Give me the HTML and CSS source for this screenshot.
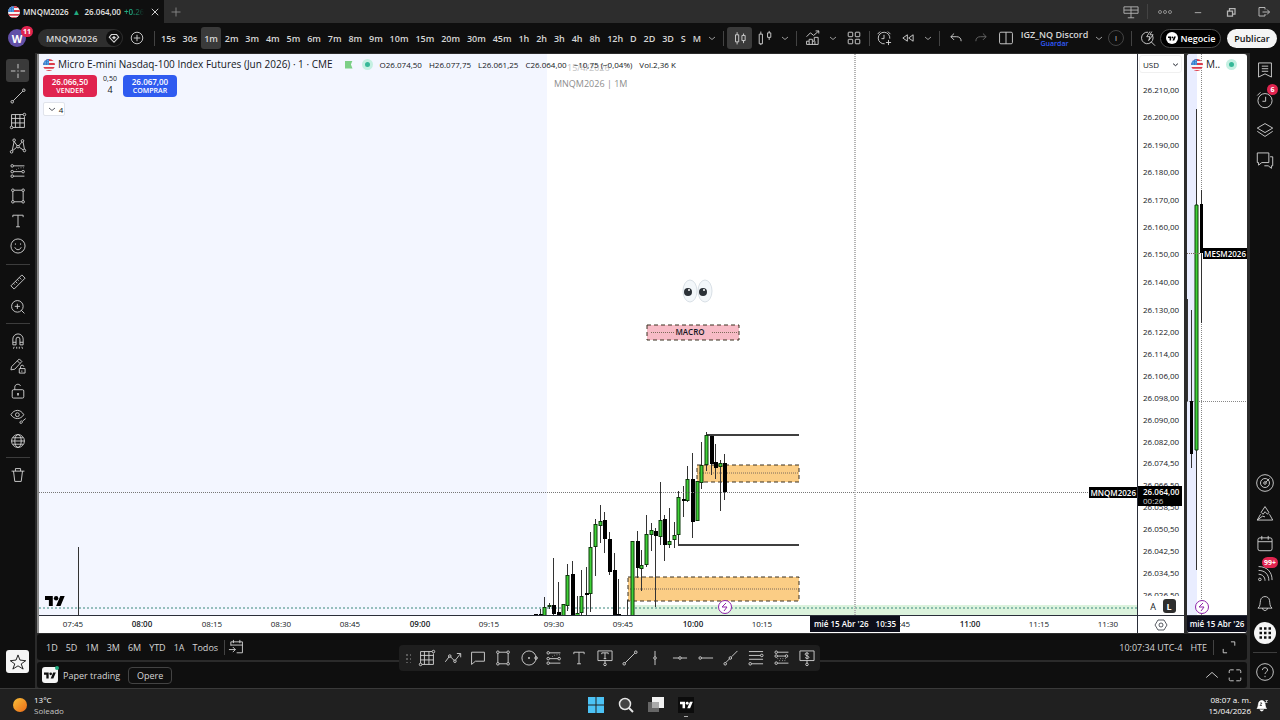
FILE: index.html
```html
<!DOCTYPE html>
<html lang="es">
<head>
    <meta charset="UTF-8">
    <meta name="viewport" content="width=device-width, initial-scale=1.0">
    <title>MNQM2026 26.064,00</title>
    <link rel="stylesheet" href="styles.css">
</head>
<body>
    <!-- Iconos compartidos -->
    <svg class="sprite" aria-hidden="true">
        <symbol id="i-flag" viewBox="0 0 18 18">
            <clipPath id="round"><circle cx="9" cy="9" r="9"/></clipPath>
            <g clip-path="url(#round)">
                <path fill="#f5f5f5" d="M0 0h18v18H0z"/>
                <path fill="#dc3b4b" d="M0 0h18v3H0zM0 6h18v3H0zM0 12h18v2.500H0zM0 16.500h18v2H0z"/>
                <path fill="#2f7fd0" d="M0 0h9v9H0z"/>
                <path stroke="#cfe2f7" stroke-dasharray="1 1.500" d="M1 2.500h8M1 5h8M1 7.500h8"/>
            </g>
        </symbol>
        <symbol id="i-tv" viewBox="0 0 36 20"><path fill="currentColor" stroke="none" d="M14 19H7V8H0V1h14zM28 19h-8L27.500 1h8z"/><circle fill="currentColor" stroke="none" cx="20" cy="5" r="4"/></symbol>
        <symbol id="i-chev" viewBox="0 0 28 28"><path d="M8 12l6 5 6-5"/></symbol>
        <symbol id="i-up" viewBox="0 0 28 28"><path d="M5 18l9-8 9 8"/></symbol>
        <symbol id="i-plus" viewBox="0 0 28 28"><path d="M14 7v14M7 14h14"/></symbol>
        <symbol id="i-close" viewBox="0 0 28 28"><path d="M9 9l10 10M19 9L9 19"/></symbol>
        <symbol id="i-pluscircle" viewBox="0 0 28 28"><circle cx="14" cy="14" r="9"/><path d="M14 9v10M9 14h10"/></symbol>
        <symbol id="i-gem" viewBox="0 0 28 28"><path stroke-width="2.500" d="M8 6h12l5 6-11 12L3 12z"/><path fill="currentColor" d="M14 10l4 3-4 4-4-4z"/></symbol>
        <symbol id="i-candles" viewBox="0 0 28 28"><path d="M7 9h5v11H7zM9.500 5v4M9.500 20v4M17 10h5v8h-5zM19.500 7v3M19.500 18v4"/></symbol>
        <symbol id="i-candles2" viewBox="0 0 28 28"><path d="M5 8h5v15H5zM7.500 4v4M7.500 23v2M18 6h5v7h-5zM20.500 3v3M20.500 13v4"/></symbol>
        <symbol id="i-indic" viewBox="0 0 28 28"><path d="M4 12l6-6 5 4 8-7M18 3h5v4M4 24v-5h4v-3h5v3h3v-6h6v11zM8 19v5M13 19v5M17 19v5"/></symbol>
        <symbol id="i-tiles" viewBox="0 0 28 28"><rect x="5" y="5" width="7" height="7" rx="1"/><rect x="16" y="5" width="7" height="7" rx="1"/><rect x="5" y="16" width="7" height="7" rx="1"/><rect x="16" y="16" width="7" height="7" rx="1"/></symbol>
        <symbol id="i-alertadd" viewBox="0 0 28 28"><path d="M15 23a9 9 0 1 1 8-8M14 9v6h-4M4 8l4-4M20 4l4 4M21 17v8M17 21h8"/></symbol>
        <symbol id="i-rewind" viewBox="0 0 28 28"><path d="M13 9v10l-7-5zM22 9v10l-7-5z"/></symbol>
        <symbol id="i-undo" viewBox="0 0 28 28"><path d="M11 7l-5 5 5 5M6 12h9c4 0 7 2 7 7"/></symbol>
        <symbol id="i-redo" viewBox="0 0 28 28"><path d="M17 7l5 5-5 5M22 12h-9c-4 0-7 2-7 7"/></symbol>
        <symbol id="i-layout" viewBox="0 0 28 28"><rect x="4" y="5" width="20" height="18" rx="2"/><path d="M14 5v18"/></symbol>
        <symbol id="i-quick" viewBox="0 0 28 28"><path d="M21 10a9 9 0 1 1-7-5M19 20l6 6M17 4l-5 8h5l-2 6 7-9h-5l3-5"/></symbol>
        <symbol id="i-cross" viewBox="0 0 28 28"><path d="M14 3v7M14 18v7M3 14h7M18 14h7M13 14h2"/></symbol>
        <symbol id="i-trend" viewBox="0 0 28 28"><circle cx="5" cy="23" r="2"/><circle cx="23" cy="5" r="2"/><path d="M6.500 21.500l15-15"/></symbol>
        <symbol id="i-grid" viewBox="0 0 28 28"><path d="M4 22V4h18M24 7v17H6M10 4v20M17 4v20M4 10h20M4 17h20"/><circle cx="24" cy="4" r="2"/><circle cx="4" cy="24" r="2"/></symbol>
        <symbol id="i-pattern" viewBox="0 0 28 28"><path d="M5 21L8 7l5 7M15 14l5-6M22 8l2 11M6 21l6-5M16 16l6 4"/><circle cx="4" cy="23" r="2"/><circle cx="8" cy="5" r="2"/><circle cx="21" cy="6" r="2"/><circle cx="24" cy="21" r="2"/><circle cx="14" cy="15" r="2"/></symbol>
        <symbol id="i-forecast" viewBox="0 0 28 28"><path d="M7 6h17M7 15h13M7 22h17"/><path stroke-dasharray="1 3" d="M11 12l5-3h7"/><circle cx="5" cy="6" r="2"/><circle cx="5" cy="15" r="2"/><circle cx="22" cy="15" r="2"/><circle cx="5" cy="22" r="2"/></symbol>
        <symbol id="i-forecast2" viewBox="0 0 28 28"><path d="M7 5h17M7 11h12M7 22h17"/><path stroke-dasharray="1 3" d="M7 15h16M10 18h12"/><circle cx="5" cy="5" r="2"/><circle cx="5" cy="11" r="2"/><circle cx="21" cy="11" r="2"/><circle cx="5" cy="22" r="2"/></symbol>
        <symbol id="i-rect" viewBox="0 0 28 28"><path d="M8 5h12M8 23h12M6 7v14M22 7v14"/><circle cx="6" cy="5" r="2"/><circle cx="22" cy="5" r="2"/><circle cx="6" cy="23" r="2"/><circle cx="22" cy="23" r="2"/></symbol>
        <symbol id="i-text" viewBox="0 0 28 28"><path d="M6 8V5h16v3M14 5v18M11 23h6"/></symbol>
        <symbol id="i-smile" viewBox="0 0 28 28"><circle cx="14" cy="14" r="11"/><path d="M10 10v2M18 10v2M9 16c2 5 8 5 10 0"/></symbol>
        <symbol id="i-ruler" viewBox="0 0 28 28"><path d="M3 20L20 3l5 5L8 25zM16 7l3 3M13 10l2 2M10 13l3 3M7 16l2 2"/></symbol>
        <symbol id="i-zoom" viewBox="0 0 28 28"><circle cx="13" cy="13" r="9"/><path d="M19 19l5 5M13 9v8M9 13h8"/></symbol>
        <symbol id="i-magnet" viewBox="0 0 28 28"><path d="M6 20v-9a8 8 0 0 1 16 0v9h-5v-9a3 3 0 0 0-6 0v9zM6 16h5M17 16h5M8 23l-1 3M12 23v3M16 23v3M20 23l1 3"/></symbol>
        <symbol id="i-penlock" viewBox="0 0 28 28"><path d="M4 15L16 3l4 4L9 19l-6 1zM13 6l4 4M16 18h9v7h-9zM18 18v-3c0-3 5-3 5 0M20 21v2"/></symbol>
        <symbol id="i-lock" viewBox="0 0 28 28"><rect x="5" y="12" width="18" height="13" rx="2"/><path d="M9 12V8c0-5 7-6 9-2"/><path stroke-width="2.500" d="M14 17v4"/></symbol>
        <symbol id="i-eye" viewBox="0 0 28 28"><path d="M3 12c5-9 15-9 20 0-5 8-15 8-20 0z"/><circle cx="13" cy="12" r="3"/><path d="M17 25c0-4 3-4 4-2 0 2-2 3-4 2zM21 22l5-4"/></symbol>
        <symbol id="i-globe" viewBox="0 0 28 28"><circle cx="14" cy="14" r="10"/><ellipse cx="14" cy="14" rx="5" ry="10"/><path d="M4 14h20M6 9h16M6 19h16"/></symbol>
        <symbol id="i-trash" viewBox="0 0 28 28"><path d="M4 8h20M10 8V4h8v4M7 8l2 16h10l2-16"/></symbol>
        <symbol id="i-star" viewBox="0 0 28 28"><path d="M14 3l3 8 9 1-7 5 3 8-8-5-8 5 3-8-7-5 9-1z"/></symbol>
        <symbol id="i-list" viewBox="0 0 28 28"><path d="M4 3h20v22l-10-5-10 5zM9 8h10M9 12h10M9 16h10"/></symbol>
        <symbol id="i-alarm" viewBox="0 0 28 28"><circle cx="14" cy="15" r="11"/><path d="M15 9v7h-5M2 7l5-5"/></symbol>
        <symbol id="i-layers" viewBox="0 0 28 28"><path d="M14 4l12 7-12 7-12-7zM2 16l12 8 12-8"/></symbol>
        <symbol id="i-chat" viewBox="0 0 28 28"><path d="M2 3h18v15H9l-5 4v-4H2zM22 9h4v14h-2v4l-5-4h-6"/></symbol>
        <symbol id="i-radar" viewBox="0 0 28 28"><circle cx="14" cy="14" r="13"/><circle cx="14" cy="14" r="7"/><circle cx="14" cy="14" r="2"/><path d="M15 13l6-6"/></symbol>
        <symbol id="i-peaks" viewBox="0 0 28 28"><path d="M8 13l6-9 6 9M8 13l3 3 3-4 4 4 2-3M7 16l-5 9h24l-5-9M2 25l8-6 4 1"/></symbol>
        <symbol id="i-calendar" viewBox="0 0 28 28"><rect x="3" y="6" width="22" height="20" rx="3"/><path d="M3 12h22M9 3v6M19 3v6"/></symbol>
        <symbol id="i-stream" viewBox="0 0 28 28"><circle cx="6" cy="24" r="2"/><path d="M4 16c6 0 10 4 10 10M4 10c10 0 16 6 16 16M4 4c14 0 21 9 21 21"/></symbol>
        <symbol id="i-bell" viewBox="0 0 28 28"><path d="M3 22c4-3 3-7 4-12 1-8 13-8 14 0 1 5 0 9 4 12zM10 22c1 5 7 5 8 0"/></symbol>
        <symbol id="i-dots" viewBox="0 0 28 28"><path stroke-width="5" stroke-dasharray="5 4" d="M3 5h23M3 14h23M3 23h23"/></symbol>
        <symbol id="i-help" viewBox="0 0 28 28"><circle cx="14" cy="14" r="13"/><path d="M10 11c0-5 8-5 8 0 0 3-4 3-4 6M14 20v2"/></symbol>
        <symbol id="i-path" viewBox="0 0 28 28"><path d="M2 20l6-8M10 12l6 6M18 17l7-9M20 7h6v6"/><circle cx="9" cy="11" r="2"/><circle cx="17" cy="19" r="2"/></symbol>
        <symbol id="i-note" viewBox="0 0 28 28"><path d="M4 5h20v14H10l-6 5z"/></symbol>
        <symbol id="i-circle" viewBox="0 0 28 28"><circle cx="14" cy="14" r="11"/><circle cx="14" cy="14" r="1"/><circle cx="25" cy="14" r="2"/></symbol>
        <symbol id="i-anchor" viewBox="0 0 28 28"><path d="M3 3h22v15H3zM9 8V6h10v2M14 6v9M12 15h4M14 18v4"/><circle cx="14" cy="24" r="2"/></symbol>
        <symbol id="i-vline" viewBox="0 0 28 28"><path d="M14 3v9M14 16v9"/><circle cx="14" cy="14" r="2"/></symbol>
        <symbol id="i-hline" viewBox="0 0 28 28"><path d="M3 14h9M16 14h9"/><circle cx="14" cy="14" r="2"/></symbol>
        <symbol id="i-ray" viewBox="0 0 28 28"><path d="M7 14h18"/><circle cx="5" cy="14" r="2"/></symbol>
        <symbol id="i-ext" viewBox="0 0 28 28"><path d="M6 21l6-6M15 12l9-9"/><circle cx="5" cy="23" r="2"/><circle cx="13" cy="14" r="2"/></symbol>
        <symbol id="i-fib" viewBox="0 0 28 28"><path d="M3 4h22M3 10h18M3 16h22M7 23h18"/><circle cx="23" cy="10" r="2"/><circle cx="5" cy="23" r="2"/></symbol>
        <symbol id="i-price" viewBox="0 0 28 28"><path d="M3 3h22v15H3zM17 8c-2-3-6-2-6 0 0 3 6 2 6 5 0 2-4 3-6 0M14 5v11M14 18v4"/><circle cx="14" cy="24" r="2"/></symbol>
        <symbol id="i-goto" viewBox="0 0 28 28"><path d="M6 12V6h18v17H15M6 11h18M10 3v5M20 3v5M3 18h10M9 14l4 4-4 4"/></symbol>
        <symbol id="i-expand" viewBox="0 0 28 28"><path d="M17 6h6v6M5 17v6h6"/></symbol>
        <symbol id="i-maxim" viewBox="0 0 28 28"><path d="M5 11V8q0-2 2-2h5M16 6h5q2 0 2 2v3M5 18v3q0 2 2 2h5M16 23h5q2 0 2-2v-3"/></symbol>
        <symbol id="i-split" viewBox="0 0 28 28"><path d="M3 6h22v10H3zM14 6v17M3 11h22M9 23h10"/></symbol>
        <symbol id="i-more" viewBox="0 0 28 28"><circle cx="4" cy="14" r="3"/><circle cx="14" cy="14" r="3"/><circle cx="24" cy="14" r="3"/></symbol>
        <symbol id="i-min" viewBox="0 0 28 28"><path d="M9 15h10"/></symbol>
        <symbol id="i-restore" viewBox="0 0 28 28"><path stroke-width="2.500" d="M7 12h10v10H7zM11 12V7h11v11h-5"/></symbol>
        <symbol id="i-exit" viewBox="0 0 28 28"><path stroke-width="2" d="M16 9V5H4v17h12v-4M11 14h14M20 9l5 5-5 5"/></symbol>
        <symbol id="i-hex" viewBox="0 0 28 28"><path d="M8 4h12l6 10-6 10H8L2 14z"/><circle cx="14" cy="14" r="4"/></symbol>
        <symbol id="i-belldnd" viewBox="0 0 28 28"><path fill="currentColor" d="M4 21c3-3 2-8 4-13 3-4 8-4 11 0 2 5 1 10 4 13zM10 23c1 4 6 4 7 0"/><path stroke="#202020" d="M10 10h4l-4 5h4"/><path d="M21 5h4l-4 4h4"/></symbol>
    </svg>

    <!-- Barra de ventana -->
    <header class="titlebar">
        <div class="tab">
            <svg class="flag"><use href="#i-flag"/></svg>
            <b>MNQM2026</b>
            <span class="arrow">▲</span>
            <span>26.064,00</span>
            <span class="change">+0.26%</span>
            <button class="close" aria-label="Cerrar"><svg class="icon"><use href="#i-close"/></svg></button>
        </div>
        <button class="new-tab" aria-label="Nueva"><svg class="icon"><use href="#i-plus"/></svg></button>
        <div class="window-buttons">
            <button aria-label="Dividir"><svg class="icon"><use href="#i-split"/></svg></button>
            <i class="sep"></i>
            <button aria-label="Más"><svg class="icon small"><use href="#i-more"/></svg></button>
            <button aria-label="Minimizar"><svg class="icon"><use href="#i-min"/></svg></button>
            <button aria-label="Restaurar"><svg class="icon small"><use href="#i-restore"/></svg></button>
            <button aria-label="Salir"><svg class="icon small"><use href="#i-exit"/></svg></button>
        </div>
    </header>

    <!-- Barra superior -->
    <nav class="toolbar">
        <button class="avatar">W<span class="badge">11</span></button>
        <button class="symbol-search">MNQM2026 <span class="gem"><svg class="icon small"><use href="#i-gem"/></svg></span></button>
        <button class="add" aria-label="Comparar"><svg class="icon"><use href="#i-pluscircle"/></svg></button>
        <i class="sep"></i>
        <div class="intervals">
            <button>15s</button><button>30s</button><button class="active">1m</button><button>2m</button><button>3m</button><button>4m</button><button>5m</button><button>6m</button><button>7m</button><button>8m</button><button>9m</button><button>10m</button><button>15m</button><button>20m</button><button>30m</button><button>45m</button><button>1h</button><button>2h</button><button>3h</button><button>4h</button><button>8h</button><button>12h</button><button>D</button><button>2D</button><button>3D</button><button>S</button><button>M</button>
        </div>
        <button class="chev" aria-label="Intervalos"><svg class="icon small"><use href="#i-chev"/></svg></button>
        <i class="sep"></i>
        <button class="tool active" aria-label="Velas"><svg class="icon"><use href="#i-candles"/></svg></button>
        <button class="tool" aria-label="Velas huecas"><svg class="icon"><use href="#i-candles2"/></svg></button>
        <button class="chev" aria-label="Tipos"><svg class="icon small"><use href="#i-chev"/></svg></button>
        <i class="sep"></i>
        <button class="tool" aria-label="Indicadores"><svg class="icon"><use href="#i-indic"/></svg></button>
        <button class="chev" aria-label="Favoritos"><svg class="icon small"><use href="#i-chev"/></svg></button>
        <button class="tool" aria-label="Plantillas"><svg class="icon"><use href="#i-tiles"/></svg></button>
        <i class="sep"></i>
        <button class="tool narrow" aria-label="Alerta"><svg class="icon"><use href="#i-alertadd"/></svg></button>
        <button class="tool" aria-label="Repetición"><svg class="icon"><use href="#i-rewind"/></svg></button>
        <button class="chev" aria-label="Opciones"><svg class="icon small"><use href="#i-chev"/></svg></button>
        <i class="sep"></i>
        <button class="tool" aria-label="Deshacer"><svg class="icon"><use href="#i-undo"/></svg></button>
        <button class="tool dim" aria-label="Rehacer"><svg class="icon"><use href="#i-redo"/></svg></button>
        <button class="tool" aria-label="Diseño"><svg class="icon"><use href="#i-layout"/></svg></button>
        <button class="layout-name">IGZ_NQ Discord<small>Guardar</small></button>
        <button class="chev" aria-label="Diseños"><svg class="icon small"><use href="#i-chev"/></svg></button>
        <button class="ring">I</button>
        <i class="sep"></i>
        <button class="tool" aria-label="Buscar"><svg class="icon"><use href="#i-quick"/></svg></button>
        <button class="trade"><span class="disc"><svg class="logo"><use href="#i-tv"/></svg></span>Negocie</button>
        <button class="publish">Publicar</button>
    </nav>

    <div class="workspace">
        <!-- Herramientas de dibujo -->
        <aside class="left-bar">
            <button class="active" aria-label="Cruz"><svg class="icon"><use href="#i-cross"/></svg></button>
            <button aria-label="Línea"><svg class="icon"><use href="#i-trend"/></svg></button>
            <button aria-label="Gann"><svg class="icon"><use href="#i-grid"/></svg></button>
            <button aria-label="Patrones"><svg class="icon"><use href="#i-pattern"/></svg></button>
            <button aria-label="Proyección"><svg class="icon"><use href="#i-forecast"/></svg></button>
            <button aria-label="Formas"><svg class="icon"><use href="#i-rect"/></svg></button>
            <button aria-label="Texto"><svg class="icon"><use href="#i-text"/></svg></button>
            <button aria-label="Emoji"><svg class="icon"><use href="#i-smile"/></svg></button>
            <hr class="first">
            <button aria-label="Medir"><svg class="icon"><use href="#i-ruler"/></svg></button>
            <button aria-label="Ampliar"><svg class="icon"><use href="#i-zoom"/></svg></button>
            <hr>
            <button aria-label="Imán"><svg class="icon"><use href="#i-magnet"/></svg></button>
            <button aria-label="Modo dibujo"><svg class="icon"><use href="#i-penlock"/></svg></button>
            <button aria-label="Bloquear"><svg class="icon"><use href="#i-lock"/></svg></button>
            <button aria-label="Ocultar"><svg class="icon"><use href="#i-eye"/></svg></button>
            <button aria-label="Sincronizar"><svg class="icon"><use href="#i-globe"/></svg></button>
            <hr>
            <button aria-label="Eliminar"><svg class="icon"><use href="#i-trash"/></svg></button>
            <button class="favorites" aria-label="Favoritos"><svg class="icon"><use href="#i-star"/></svg></button>
        </aside>

        <main class="center">
            <div class="charts">
                <section class="chart">
                    <div class="plot">
                        <svg class="canvas" id="mainPlot">
                            <rect class="session" width="508" height="100%"/>
                            <rect class="band" x="592" y="551" width="100%" height="10"/>
                            <text class="watermark faint" x="528" y="17">15/4/2026</text>
                            <text class="watermark" x="515" y="33">MNQM2026 | 1M</text>
                            <path class="bid" d="M0 554H4000"/>
                            <rect class="zone" x="658" y="411" width="102" height="17"/>
                            <path class="middle" d="M658 419H760"/>
                            <rect class="zone" x="589" y="523" width="171" height="24"/>
                            <path class="middle" d="M589 535H760"/>
                            <rect class="zone macro" x="608" y="271" width="92" height="15"/>
                            <path class="middle" d="M612 278.500H635M673 278.500H698"/>
                            <text class="macro-label" x="651" y="281">MACRO</text>
                            <path class="level" d="M668 381H760M639 491H760"/>
                            <path class="wick" d="M39.500 493V561"/>
                            <g id="candles"></g>
                            <path class="price-line" d="M0 438.500H4000"/>
                            <path class="crosshair" d="M816 0V600"/>
                            <g class="eyes">
                                <ellipse cx="651" cy="237" rx="7" ry="11"/><ellipse cx="666" cy="237" rx="7" ry="11"/>
                                <circle cx="649" cy="238" r="4"/><circle cx="664" cy="238" r="4"/>
                                <circle class="glint" cx="650" cy="236" r="1"/><circle class="glint" cx="665" cy="236" r="1"/>
                            </g>
                            <g class="flash"><circle cx="686" cy="553" r="6.500"/><path d="M687 549l-4 4h5l-3 4"/></g>
                            <svg class="mark" x="6" y="541" width="20" height="12"><use href="#i-tv"/></svg>
                        </svg>
                        <div class="legend">
                            <h1><svg class="flag"><use href="#i-flag"/></svg>Micro E-mini Nasdaq-100 Index Futures (Jun 2026) · 1 · CME</h1>
                            <i class="pennant"></i><i class="status"></i>
                            <p><span>O26.074,50</span><span>H26.077,75</span><span>L26.061,25</span><span>C26.064,00</span><span>−10,75 (−0,04%)</span><span>Vol.2,36 K</span></p>
                        </div>
                        <div class="order">
                            <button class="sell"><b>26.066,50</b>VENDER</button>
                            <div class="spread"><small>0,50</small>4</div>
                            <button class="buy"><b>26.067,00</b>COMPRAR</button>
                        </div>
                        <button class="collapse"><svg class="icon small"><use href="#i-chev"/></svg>4</button>
                        <span class="price-tag">MNQM2026</span>
                    </div>
                    <div class="price-axis">
                        <svg class="canvas" id="priceAxis"></svg>
                        <div class="currency">
                            <select aria-label="Moneda"><option>USD</option></select>
                            <svg class="icon small"><use href="#i-chev"/></svg>
                        </div>
                        <div class="last-price"><b>26.064,00</b>00:26</div>
                        <div class="scale"><button>A</button><button class="active">L</button></div>
                    </div>
                    <div class="time-axis">
                        <svg class="canvas" id="timeAxis"></svg>
                        <span class="time-tag"><b>mié 15 Abr '26</b><b>10:35</b></span>
                    </div>
                    <button class="axis-settings" aria-label="Ajustes"><svg class="icon small"><use href="#i-hex"/></svg></button>
                </section>
                <section class="chart side">
                    <div class="plot">
                        <svg class="canvas">
                            <rect class="session deep" width="10" height="100%"/>
                            <path class="crosshair thin" d="M14.500 0V600M0 347.500H200"/>
                            <path class="wick" d="M.5 245V347M4.500 256V414M9.500 55V516M14.500 136V269"/>
                            <path class="down" d="M3 347h3v53H3zM13 150h3v49h-3z"/>
                            <path class="up" d="M8 151h3v245H8z"/>
                            <path class="middle" d="M0 199.500H60"/>
                            <g class="flash"><circle cx="15" cy="553" r="6.500"/><path d="M16 549l-4 4h5l-3 4"/></g>
                        </svg>
                        <div class="legend">
                            <h1><svg class="flag"><use href="#i-flag"/></svg>M..</h1><i class="status"></i>
                        </div>
                        <span class="price-tag">MESM2026</span>
                    </div>
                    <div class="time-axis"><span class="time-tag"><b>mié 15 Abr '26</b></span></div>
                </section>
            </div>

            <div class="range-bar">
                <button>1D</button><button>5D</button><button>1M</button><button>3M</button><button>6M</button><button>YTD</button><button>1A</button><button>Todos</button>
                <i class="sep"></i>
                <button class="goto" aria-label="Ir a"><svg class="icon"><use href="#i-goto"/></svg></button>
                <button class="clock">10:07:34 UTC-4</button>
                <button>HTE</button>
                <i class="sep"></i>
                <button aria-label="Expandir"><svg class="icon"><use href="#i-expand"/></svg></button>
            </div>

            <div class="broker-bar">
                <span class="broker"><svg class="logo"><use href="#i-tv"/></svg></span>
                <span>Paper trading</span>
                <button class="operate">Opere</button>
                <button class="panel-up" aria-label="Abrir panel"><svg class="icon"><use href="#i-up"/></svg></button>
                <button aria-label="Maximizar"><svg class="icon"><use href="#i-maxim"/></svg></button>
            </div>

            <!-- Barra flotante de favoritos -->
            <div class="floating">
                <i class="grip"></i>
                <button aria-label="Gann"><svg class="icon"><use href="#i-grid"/></svg></button>
                <button aria-label="Ruta"><svg class="icon"><use href="#i-path"/></svg></button>
                <button aria-label="Nota"><svg class="icon"><use href="#i-note"/></svg></button>
                <button aria-label="Rectángulo"><svg class="icon"><use href="#i-rect"/></svg></button>
                <button aria-label="Círculo"><svg class="icon"><use href="#i-circle"/></svg></button>
                <button aria-label="Posición larga"><svg class="icon"><use href="#i-forecast"/></svg></button>
                <button aria-label="Texto"><svg class="icon"><use href="#i-text"/></svg></button>
                <button aria-label="Texto anclado"><svg class="icon"><use href="#i-anchor"/></svg></button>
                <button aria-label="Línea"><svg class="icon"><use href="#i-trend"/></svg></button>
                <button aria-label="Línea vertical"><svg class="icon"><use href="#i-vline"/></svg></button>
                <button aria-label="Línea horizontal"><svg class="icon"><use href="#i-hline"/></svg></button>
                <button aria-label="Rayo horizontal"><svg class="icon"><use href="#i-ray"/></svg></button>
                <button aria-label="Rayo"><svg class="icon"><use href="#i-ext"/></svg></button>
                <button aria-label="Fibonacci"><svg class="icon"><use href="#i-fib"/></svg></button>
                <button aria-label="Posición corta"><svg class="icon"><use href="#i-forecast2"/></svg></button>
                <button aria-label="Precio"><svg class="icon"><use href="#i-price"/></svg></button>
            </div>
        </main>

        <aside class="right-bar">
            <button aria-label="Lista"><svg class="icon"><use href="#i-list"/></svg></button>
            <button aria-label="Alertas"><svg class="icon"><use href="#i-alarm"/></svg><span class="badge">6</span></button>
            <button aria-label="Objetos"><svg class="icon"><use href="#i-layers"/></svg></button>
            <button aria-label="Chats"><svg class="icon"><use href="#i-chat"/></svg></button>
            <button class="push" aria-label="Filtros"><svg class="icon"><use href="#i-radar"/></svg></button>
            <button aria-label="Pine"><svg class="icon"><use href="#i-peaks"/></svg></button>
            <button aria-label="Calendario"><svg class="icon"><use href="#i-calendar"/></svg></button>
            <button aria-label="Ideas"><svg class="icon"><use href="#i-stream"/></svg><span class="badge">99+</span></button>
            <button aria-label="Notificaciones"><svg class="icon"><use href="#i-bell"/></svg></button>
            <button class="apps" aria-label="Productos"><span><svg class="icon small"><use href="#i-dots"/></svg></span></button>
            <hr>
            <button aria-label="Ayuda"><svg class="icon"><use href="#i-help"/></svg></button>
        </aside>
    </div>

    <!-- Barra de tareas -->
    <footer class="taskbar">
        <div class="weather"><i class="sun"></i><p>13°C<br><span>Soleado</span></p></div>
        <div class="apps-row">
            <button aria-label="Inicio"><svg viewBox="0 0 16 16"><path fill="#4cc2f5" d="M0 0h7.500v7.500H0zM8.500 0H16v7.500H8.500zM0 8.500h7.500V16H0zM8.500 8.500H16V16H8.500z"/></svg></button>
            <button aria-label="Buscar"><svg viewBox="0 0 16 16"><circle cx="7" cy="7" r="5.500" fill="#444" stroke="#e6e6e6" stroke-width="1.500"/><path stroke="#e6e6e6" stroke-width="2" d="M11 11l4 4"/></svg></button>
            <button aria-label="Vista de tareas"><svg viewBox="0 0 16 16"><path fill="#666" d="M0 5h11v10H0z"/><path fill="#f2f2f2" d="M4 0h12v11H4z"/><path fill="#aaa" d="M4 5h7v6H4z"/></svg></button>
            <button class="running" aria-label="TradingView"><svg class="logo"><use href="#i-tv"/></svg></button>
        </div>
        <div class="tray"><p>08:07 a. m.<br>15/04/2026</p><svg class="icon small"><use href="#i-belldnd"/></svg></div>
    </footer>

    <script>
        const NS = 'http://www.w3.org/2000/svg';

        function add(parent, tag, attrs, text) {
            const el = document.createElementNS(NS, tag);
            for (const key in attrs) el.setAttribute(key, attrs[key]);
            if (text) el.textContent = text;
            parent.appendChild(el);
        }

        // Velas: [indice, sube, maximo, cuerpo arriba, cuerpo abajo, minimo]
        const candles = [
            [0, 0, 560, 560, 562, 562], [1, 0, 555, 560, 562, 562], [2, 1, 543, 553, 562, 562],
            [3, 1, 549, 551, 553, 555], [4, 0, 504, 551, 560, 562], [5, 0, 528, 558, 562, 562],
            [6, 1, 550, 550, 562, 562], [7, 1, 510, 521, 552, 557], [8, 0, 507, 520, 562, 562],
            [9, 1, 542, 559, 562, 562], [10, 1, 516, 542, 559, 562], [11, 0, 513, 539, 541, 562],
            [12, 1, 478, 493, 540, 558], [13, 1, 465, 470, 493, 522], [14, 1, 451, 467, 472, 489],
            [15, 0, 458, 466, 485, 499], [16, 0, 478, 485, 518, 521], [17, 0, 499, 516, 562, 562],
            [18, 0, 525, 560, 562, 562], [20, 0, 546, 561, 562, 562], [21, 1, 487, 487, 562, 562],
            [22, 0, 477, 487, 514, 524], [23, 1, 496, 511, 515, 537], [24, 1, 461, 480, 511, 513],
            [25, 1, 469, 476, 481, 497], [26, 0, 474, 477, 482, 553], [27, 1, 428, 466, 483, 491],
            [28, 0, 461, 465, 491, 507], [29, 1, 454, 487, 491, 494], [30, 1, 468, 481, 486, 494],
            [31, 1, 437, 443, 481, 491], [32, 0, 432, 445, 447, 463], [33, 1, 412, 425, 447, 448],
            [34, 0, 399, 425, 468, 484], [35, 1, 427, 427, 467, 467], [36, 1, 388, 411, 429, 435],
            [37, 1, 378, 381, 411, 417], [38, 0, 381, 382, 410, 421], [39, 0, 390, 408, 414, 425],
            [40, 1, 406, 409, 413, 457], [41, 0, 400, 409, 438, 446]
        ];
        const group = document.getElementById('candles');
        candles.forEach(([i, up, high, top, bottom, low]) => {
            const x = Math.round(496 + i * 4.62);
            add(group, 'path', { class: 'wick', d: `M${x + 0.5} ${high}V${low}` });
            if (up) {
                add(group, 'rect', { class: 'up', x: x - 1, y: top + 0.5, width: 3, height: Math.max(bottom - top - 1, 1) });
            } else {
                add(group, 'rect', { class: 'down', x: x - 1, y: top, width: 4, height: bottom - top });
            }
        });

        // Eje de precios
        const prices = [
            ['26.210,00', 36], ['26.200,00', 63], ['26.190,00', 91], ['26.180,00', 118], ['26.170,00', 146],
            ['26.160,00', 173], ['26.150,00', 200], ['26.140,00', 228], ['26.130,00', 256], ['26.122,00', 278],
            ['26.114,00', 300], ['26.106,00', 322], ['26.098,00', 344], ['26.090,00', 366], ['26.082,00', 388],
            ['26.074,50', 409], ['26.066,50', 431], ['26.058,50', 453], ['26.050,50', 475], ['26.042,50', 497],
            ['26.034,50', 519], ['26.026,50', 541]
        ];
        prices.forEach(([label, y]) => add(document.getElementById('priceAxis'), 'text', { x: 5, y: y + 3 }, label));

        // Eje de tiempo
        const times = [
            ['07:45', 34], ['08:00', 103], ['08:15', 173], ['08:30', 242], ['08:45', 311], ['09:00', 381],
            ['09:15', 450], ['09:30', 515], ['09:45', 584], ['10:00', 654], ['10:15', 723], ['10:45', 861],
            ['11:00', 931], ['11:15', 1000], ['11:30', 1069]
        ];
        times.forEach(([label, x]) => add(document.getElementById('timeAxis'), 'text', { x: x, y: 11, class: label.endsWith(':00') ? 'hour' : '' }, label));
    </script>
</body>
</html>
```
FILE: styles.css
```css
/* Base */
* {
    box-sizing: border-box;
}

body {
    margin: 0;
    height: 100vh;
    display: flex;
    flex-direction: column;
    overflow: hidden;
    background-color: #2b2b2b;
    color: #d6d6d6;
    font-family: "Trebuchet MS", "Open Sans", "Noto Sans", sans-serif;
    font-size: 9px;
    line-height: 11px;
}

button {
    position: relative;
    display: flex;
    align-items: center;
    justify-content: center;
    margin: 0;
    padding: 0;
    border: none;
    background: none;
    color: inherit;
    font: inherit;
    cursor: pointer;
}

b {
    font-weight: 600;
}

p, h1 {
    margin: 0;
}

.sprite {
    position: absolute;
    width: 0;
    height: 0;
}

.icon {
    display: block;
    flex: none;
    width: 18px;
    height: 18px;
    fill: none;
    stroke: currentColor;
    stroke-width: 1.4;
}

.icon.small {
    width: 14px;
    height: 14px;
}

.flag {
    flex: none;
    width: 12px;
    height: 12px;
}

.logo {
    width: 12px;
    height: 7px;
}

.sep {
    flex: none;
    width: 1px;
    height: 15px;
    margin: 0 3px;
    background-color: #434343;
}

hr {
    width: 24px;
    height: 1px;
    margin: 3px 0;
    border: none;
    background-color: #3d3d3d;
}

hr.first {
    margin-top: 5px;
}

.badge {
    position: absolute;
    top: -1px;
    right: 2px;
    min-width: 11px;
    padding: 0 2px;
    border-radius: 6px;
    background-color: #e0244f;
    color: #ffffff;
    font-size: 7px;
    font-weight: bold;
    line-height: 11px;
    text-align: center;
}

/* Barra de ventana */
.titlebar {
    display: flex;
    align-items: center;
    flex: none;
    height: 23px;
    background-color: #2d2d2d;
}

.tab {
    display: flex;
    align-items: center;
    gap: 3px;
    width: 164px;
    height: 23px;
    padding: 0 1px 0 8px;
    background-color: #0f0f0f;
    color: #e4e4e4;
    font-size: 8px;
    font-weight: 600;
}

.arrow {
    margin: 0 1px;
    color: #22ab80;
}

.change {
    flex: 1;
    width: 0;
    overflow: hidden;
    white-space: nowrap;
    color: #22ab80;
    -webkit-mask-image: linear-gradient(to right, #000 40%, transparent);
}

.close {
    width: 16px;
}

.new-tab {
    width: 24px;
    color: #8a8a8a;
}

.window-buttons {
    display: flex;
    align-items: center;
    margin-left: auto;
    color: #b5b5b5;
}

.window-buttons button {
    width: 33px;
}

.window-buttons .sep {
    margin: 0;
}

/* Barra superior */
.toolbar {
    display: flex;
    align-items: center;
    flex: none;
    height: 30px;
    padding: 0 3px 0 8px;
    background-color: #0f0f0f;
}

.avatar {
    width: 18px;
    height: 18px;
    border-radius: 50%;
    background-color: #6250a8;
    color: #ffffff;
    font-size: 11px;
    font-weight: bold;
}

.avatar .badge {
    top: -3px;
    right: -7px;
}

.symbol-search {
    justify-content: space-between;
    width: 85px;
    height: 18px;
    margin-left: 12px;
    padding: 0 1px 0 8px;
    border-radius: 9px;
    background-color: #2e2e2e;
    font-weight: 600;
}

.gem {
    padding: 2px;
    border-radius: 50%;
    background-color: #0f0f0f;
}

.gem .icon {
    width: 12px;
    height: 12px;
}

.add {
    width: 28px;
}

.intervals {
    display: flex;
    flex: 1;
    justify-content: space-between;
    font-weight: 600;
}

.intervals button {
    height: 22px;
    padding: 0 3px;
    border-radius: 3px;
}

.intervals .active,
.tool.active,
.left-bar .active {
    background-color: #3a3a3a;
}

.tool {
    width: 25px;
    height: 22px;
    border-radius: 3px;
}

.tool.narrow {
    width: 22px;
}

.tool.dim {
    color: #6a6a6a;
}

.chev {
    width: 16px;
}

.layout-name {
    flex-direction: column;
    width: 73px;
    white-space: nowrap;
    line-height: 10px;
    font-weight: 600;
}

.layout-name small {
    color: #2f5bff;
    font-size: 7px;
    line-height: 7px;
}

.ring {
    width: 16px;
    height: 16px;
    margin: 0 4px 0 1px;
    border: 1px solid #434343;
    border-radius: 50%;
    font-size: 7px;
}

.trade {
    gap: 3px;
    width: 61px;
    height: 19px;
    margin-right: 6px;
    border: 1px solid #4a4a4a;
    border-radius: 10px;
    background-color: #000000;
    color: #ffffff;
    font-weight: 600;
}

.disc {
    display: flex;
    align-items: center;
    justify-content: center;
    width: 12px;
    height: 12px;
    border-radius: 50%;
    background-color: #ffffff;
    color: #000000;
}

.disc .logo {
    width: 8px;
}

.publish {
    width: 50px;
    height: 19px;
    border-radius: 10px;
    background-color: #f5f5f5;
    color: #0f0f0f;
    font-weight: 600;
}

/* Zona de trabajo */
.workspace {
    display: flex;
    flex: 1;
    min-height: 0;
}

.left-bar,
.right-bar {
    display: flex;
    flex-direction: column;
    align-items: center;
    flex: none;
    background-color: #0f0f0f;
}

.left-bar {
    gap: 2px;
    width: 35px;
    padding: 6px 0 15px;
}

.left-bar button {
    width: 23px;
    height: 23px;
    border-radius: 3px;
}

.left-bar .favorites {
    margin-top: auto;
    background-color: #f5f5f5;
    color: #0f0f0f;
}

.right-bar {
    width: 30px;
    padding: 2px 0 1px;
}

.right-bar button {
    width: 30px;
    height: 30px;
}

.right-bar .push {
    margin-top: auto;
}

.right-bar hr {
    margin: 4px 0;
}

.apps span {
    display: flex;
    align-items: center;
    justify-content: center;
    width: 22px;
    height: 22px;
    border-radius: 50%;
    background-color: #f5f5f5;
    color: #0f0f0f;
}

.center {
    position: relative;
    display: flex;
    flex-direction: column;
    flex: 1;
    min-width: 0;
    padding: 1px 3px 0 2px;
}

/* Graficos */
.charts {
    display: flex;
    flex: 1;
    gap: 3px;
    min-height: 0;
}

.chart {
    display: grid;
    grid-template-columns: 1fr 47px;
    grid-template-rows: 1fr 18px;
    flex: 1;
    min-width: 0;
    border-left: 2px solid #8a8a8a;
    background-color: #ffffff;
    color: #131722;
}

.chart.side {
    display: flex;
    flex-direction: column;
    flex: none;
    width: 60px;
    border: none;
    border-radius: 3px;
    overflow: hidden;
}

.plot,
.price-axis,
.time-axis {
    position: relative;
    overflow: hidden;
}

.side .plot {
    flex: 1;
}

.side .time-axis {
    height: 18px;
}

.price-axis {
    border-left: 1px solid #2a2e39;
}

.time-axis,
.axis-settings {
    border-top: 1px solid #2a2e39;
}

.axis-settings {
    border-left: 1px solid #2a2e39;
}

.canvas {
    position: absolute;
    width: 100%;
    height: 100%;
    font-size: 8px;
}

.canvas text {
    fill: #131722;
}

.time-axis text,
.canvas .macro-label {
    text-anchor: middle;
}

.canvas .hour,
.canvas .macro-label {
    font-weight: 600;
}

.canvas .watermark {
    fill: #8e8e8e;
    font-size: 9px;
}

.canvas .faint {
    fill: #c4c4c4;
}

.session {
    fill: #f3f6ff;
}

.session.deep {
    fill: #e9edff;
}

.band {
    fill: #dcf3dd;
}

.zone {
    fill: #fbcd85;
    stroke: #3b3020;
    stroke-dasharray: 4 3;
}

.zone.macro {
    fill: #f7bbc6;
}

.middle {
    stroke: #7d6a5a;
    stroke-dasharray: 1 1;
}

.level {
    stroke: #000000;
    stroke-width: 1.5;
}

.wick {
    stroke: #333333;
}

.up {
    fill: #3fd137;
    stroke: #0c3a0a;
}

.down {
    fill: #000000;
}

.bid {
    stroke: #39877d;
    stroke-dasharray: 2 2;
}

.price-line {
    stroke: #777777;
    stroke-dasharray: 1 1;
}

.crosshair {
    fill: none;
    stroke: #b4b4b4;
    stroke-width: 2;
    stroke-dasharray: 1 1;
}

.crosshair.thin {
    stroke: #888888;
    stroke-width: 1;
}

.flash {
    fill: #ffffff;
    stroke: #8e24aa;
}

.eyes {
    fill: #f3f7fa;
    stroke: #d9e0e6;
}

.eyes circle {
    fill: #2b3137;
    stroke: none;
}

.eyes .glint {
    fill: #ffffff;
}

.mark {
    color: #000000;
}

.legend {
    position: absolute;
    top: 4px;
    left: 4px;
    display: flex;
    align-items: center;
    gap: 7px;
    white-space: nowrap;
}

.legend h1 {
    display: flex;
    align-items: center;
    gap: 3px;
    font-size: 10px;
    font-weight: normal;
    line-height: 13px;
}

.legend p {
    display: flex;
    gap: 7px;
    font-size: 8px;
}

.pennant {
    width: 8px;
    height: 8px;
    margin: 0 2px 0 5px;
    background-color: #7ccf86;
    clip-path: polygon(0 0, 100% 0, 80% 50%, 100% 100%, 0 100%);
}

.status {
    width: 11px;
    height: 11px;
    border: 3px solid #c5f0e2;
    border-radius: 50%;
    background-color: #36b898;
}

.side .legend {
    gap: 6px;
}

.order {
    position: absolute;
    top: 21px;
    left: 4px;
    display: flex;
}

.order button {
    flex-direction: column;
    width: 54px;
    height: 22px;
    border-radius: 4px;
    color: #ffffff;
    font-size: 7px;
    font-weight: 600;
    line-height: 9px;
}

.order b {
    font-size: 8px;
}

.order .sell {
    background-color: #e0244f;
}

.order .buy {
    background-color: #2f5bf0;
}

.spread {
    display: flex;
    flex-direction: column;
    align-items: center;
    width: 26px;
    line-height: 15px;
}

.spread small {
    font-size: 7px;
    line-height: 7px;
}

.collapse {
    position: absolute;
    top: 48px;
    left: 4px;
    width: 22px;
    height: 14px;
    border: 1px solid #e0e3eb;
    border-radius: 2px;
    background-color: #ffffff;
    font-size: 8px;
}

.price-tag {
    position: absolute;
    top: 433px;
    right: 0;
    padding: 0 1px;
    background-color: #000000;
    color: #ffffff;
    font-size: 8px;
    font-weight: 600;
}

.side .price-tag {
    top: 194px;
}

.currency {
    position: absolute;
    top: 1px;
    left: 1px;
    display: flex;
    align-items: center;
    width: 43px;
    height: 18px;
    border: 1px solid #f0f0f0;
    border-radius: 3px;
    background-color: #ffffff;
}

.currency select {
    appearance: none;
    flex: 1;
    min-width: 0;
    padding: 0 0 0 3px;
    border: none;
    background: none;
    color: #131722;
    font-family: inherit;
    font-size: 8px;
}

.currency .icon {
    width: 11px;
    height: 11px;
    stroke-width: 2.5;
}

.last-price {
    position: absolute;
    top: 432px;
    left: 0;
    display: flex;
    flex-direction: column;
    width: 44px;
    padding: 1px 5px;
    background-color: #000000;
    color: #d0d0d0;
    font-size: 8px;
    line-height: 9px;
}

.last-price b {
    color: #ffffff;
}

.scale {
    position: absolute;
    bottom: 0;
    left: 0;
    display: flex;
    justify-content: center;
    gap: 3px;
    width: 100%;
    padding: 3px 0 2px;
    background-color: #ffffff;
}

.scale button {
    width: 13px;
    height: 14px;
    border-radius: 3px;
}

.scale .active {
    background-color: #2e2e2e;
    color: #ffffff;
    font-weight: bold;
}

.time-tag {
    position: absolute;
    top: 0;
    left: 771px;
    display: flex;
    justify-content: center;
    gap: 7px;
    width: 90px;
    background-color: #0c0e1a;
    color: #ffffff;
    font-size: 8px;
    line-height: 16px;
    white-space: nowrap;
}

.side .time-tag {
    left: 0;
    width: 100%;
}

/* Barras inferiores */
.range-bar,
.broker-bar {
    display: flex;
    align-items: center;
    flex: none;
    height: 26px;
    margin-top: 1px;
    background-color: #0f0f0f;
    border-radius: 3px;
    font-size: 9px;
}

.range-bar {
    padding: 0 5px;
}

.range-bar button {
    padding: 0 4px;
}

.range-bar .sep {
    margin: 0 2px;
}

.range-bar .goto {
    padding: 0;
}

.range-bar .clock,
.broker-bar .panel-up {
    margin-left: auto;
}

.broker-bar {
    margin-top: 2px;
    gap: 5px;
    padding: 0 3px 0 5px;
}

.broker {
    position: relative;
    display: flex;
    align-items: center;
    justify-content: center;
    width: 16px;
    height: 16px;
    border-radius: 3px;
    background-color: #f5f5f5;
    color: #0f0f0f;
}

.broker::after {
    content: "";
    position: absolute;
    top: -1px;
    right: -1px;
    width: 4px;
    height: 4px;
    border-radius: 50%;
    background-color: #22ab80;
}

.operate {
    width: 44px;
    height: 17px;
    margin-left: 3px;
    border: 1px solid #434343;
    border-radius: 4px;
}

.floating {
    position: absolute;
    bottom: 17px;
    left: 364px;
    display: flex;
    align-items: center;
    justify-content: space-between;
    width: 421px;
    height: 26px;
    padding: 0 4px 0 6px;
    border-radius: 4px;
    background-color: #1e1e1e;
}

.grip {
    width: 6px;
    height: 10px;
    background-image: radial-gradient(#5a5a5a 1px, transparent 1px);
    background-size: 4px 4px;
}

/* Barra de tareas */
.taskbar {
    display: grid;
    grid-template-columns: 1fr auto 1fr;
    align-items: center;
    flex: none;
    height: 32px;
    padding: 0 11px 0 13px;
    border-top: 1px solid #3a3a3a;
    background-color: #202020;
    color: #ffffff;
    font-size: 8px;
    line-height: 11px;
}

.weather,
.tray {
    display: flex;
    align-items: center;
    gap: 7px;
}

.weather span {
    color: #c4c4c4;
}

.sun {
    width: 14px;
    height: 14px;
    border-radius: 50%;
    background-image: linear-gradient(135deg, #f9c13a, #ec6a17);
}

.apps-row {
    display: flex;
    gap: 14px;
}

.apps-row button,
.apps-row button > svg {
    width: 16px;
    height: 16px;
}

.apps-row .running {
    background-color: #0c0c0c;
}

.apps-row .running .logo {
    width: 13px;
    height: 8px;
}

.running::after {
    content: "";
    position: absolute;
    bottom: -4px;
    width: 4px;
    height: 1px;
    background-color: #b0b0b0;
}

.tray {
    justify-content: flex-end;
    gap: 4px;
    text-align: right;
}
```
